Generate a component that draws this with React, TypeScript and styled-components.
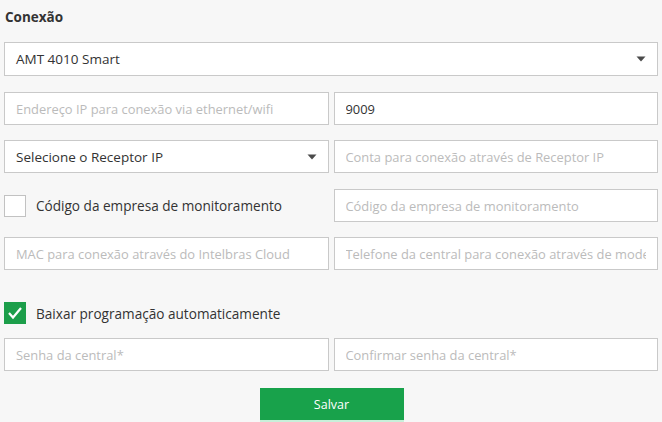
import React from "react";
import styled, { createGlobalStyle } from "styled-components";

const Global = createGlobalStyle`
  html, body { margin: 0; padding: 0; background: #f7f7f7; }
  body { font-family: "Open Sans", "Noto Sans", sans-serif; color: #333; }
  * { box-sizing: border-box; }
`;

const Page = styled.div`
  width: 662px;
  height: 422px;
  padding: 0 4px;
  background: #f7f7f7;
  overflow: hidden;
  display: flex;
  flex-direction: column;
`;

const Title = styled.h2`
  margin: 0;
  height: 42px;
  padding: 8px 0 0 1px;
  font-size: 13.5px;
  line-height: 18px;
  font-weight: 700;
  color: #333;
`;

const Grid = styled.div<{ $mt?: number }>`
  display: grid;
  grid-template-columns: 1fr 1fr;
  column-gap: 5px;
  margin-top: ${(p) => p.$mt ?? 0}px;
`;

const Field = styled.input`
  height: 33px;
  width: 100%;
  border: 1px solid #c9c9c9;
  background: #fff;
  padding: 0 11px;
  font-family: "Open Sans", "Noto Sans", sans-serif;
  font-size: 12.9px;
  color: #333;
  outline: none;
  &::placeholder { color: #bbbbbb; opacity: 1; }
`;

const SelectBox = styled.div<{ $h?: number }>`
  height: ${(p) => p.$h ?? 33}px;
  display: flex;
  align-items: center;
  justify-content: space-between;
  border: 1px solid #c9c9c9;
  background: #fff;
  padding: 0 11px 0 11px;
  font-size: 13.5px;
  color: #333;
`;

const Arrow = () => (
  <svg width="10" height="6" viewBox="0 0 10 6">
    <path d="M0.5 0.5 L9.5 0.5 L5 5.5 Z" fill="#4a4a4a" />
  </svg>
);

const CheckRow = styled.label`
  display: flex;
  align-items: center;
  gap: 10px;
  font-size: 13.6px;
  color: #333;
`;

const Box = styled.span<{ $on?: boolean }>`
  width: 22px;
  height: 22px;
  flex: none;
  display: flex;
  align-items: center;
  justify-content: center;
  background: ${(p) => (p.$on ? "#1c9e4a" : "#fff")};
  border: 1px solid ${(p) => (p.$on ? "#1c9e4a" : "#c2c2c2")};
`;

const CheckLine = styled.div`
  margin: 32px 0 14px;
  height: 22px;
  display: flex;
  align-items: center;
`;

const Actions = styled.div`
  display: flex;
  justify-content: center;
  margin-top: 17px;
`;

const SaveButton = styled.button`
  width: 144px;
  height: 32px;
  border: none;
  background: #18a24b;
  color: #fff;
  font-family: "Open Sans", "Noto Sans", sans-serif;
  font-size: 12.5px;
  box-shadow: 0 2px 0 #c8f0da;
  margin-left: 1px;
`;

export default function App() {
  return (
    <>
      <Global />
      <Page>
        <Title>Conexão</Title>
        <SelectBox $h={34}>
          <span>AMT 4010 Smart</span>
          <Arrow />
        </SelectBox>
        <Grid $mt={16}>
          <Field placeholder="Endereço IP para conexão via ethernet/wifi" />
          <Field defaultValue="9009" />
        </Grid>
        <Grid $mt={15}>
          <SelectBox>
            <span>Selecione o Receptor IP</span>
            <Arrow />
          </SelectBox>
          <Field placeholder="Conta para conexão através de Receptor IP" />
        </Grid>
        <Grid $mt={16}>
          <CheckRow>
            <Box />
            Código da empresa de monitoramento
          </CheckRow>
          <Field placeholder="Código da empresa de monitoramento" />
        </Grid>
        <Grid $mt={15}>
          <Field placeholder="MAC para conexão através do Intelbras Cloud" />
          <Field placeholder="Telefone da central para conexão através de modem" />
        </Grid>
        <CheckLine>
          <CheckRow>
            <Box $on>
              <svg width="16" height="14" viewBox="0 0 16 14">
                <path d="M2 7 L6 11.5 L14 2" fill="none" stroke="#fff" strokeWidth="2.2" />
              </svg>
            </Box>
            Baixar programação automaticamente
          </CheckRow>
        </CheckLine>
        <Grid>
          <Field placeholder="Senha da central*" />
          <Field placeholder="Confirmar senha da central*" />
        </Grid>
        <Actions>
          <SaveButton>Salvar</SaveButton>
        </Actions>
      </Page>
    </>
  );
}
